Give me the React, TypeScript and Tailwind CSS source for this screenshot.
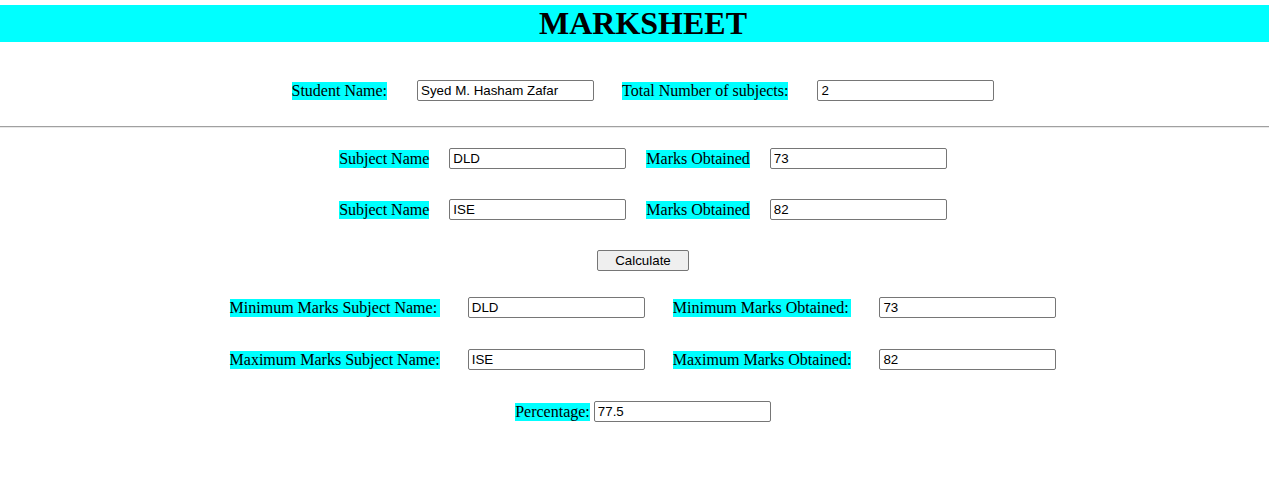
import React from "react";

const Label = ({ children }: { children: React.ReactNode }) => (
  <span className="bg-[#00ffff] text-[16px] leading-[18px] text-black whitespace-nowrap">{children}</span>
);

const Input = ({ value }: { value: string }) => (
  <input
    readOnly
    value={value}
    className="w-[177px] h-[21px] border border-[#767676] rounded-[2px] px-[3px] bg-white text-black text-[13.33px] font-['Liberation_Sans',Arial,sans-serif] outline-none"
  />
);

export default function App() {
  return (
    <div className="font-['Liberation_Serif','Times_New_Roman',serif] text-black bg-white w-[1269px] h-[500px]">
      <div className="mt-[5px] h-[37px] bg-[#00ffff] flex items-center justify-center pl-[17px]">
        <h1 className="text-[32px] font-bold leading-[37px]">MARKSHEET</h1>
      </div>

      <div className="mt-[38px] h-[21px] flex items-center justify-center pl-[17px]">
        <Label>Student Name:</Label>
        <span className="w-[30px]" />
        <Input value="Syed M. Hasham Zafar" />
        <span className="w-[28px]" />
        <Label>Total Number of subjects:</Label>
        <span className="w-[29px]" />
        <Input value="2" />
      </div>

      <div className="mt-[25px] h-[2px] border-t border-t-[#a0a0a0] border-b border-b-[#e8e8e8]" />

      <div className="mt-[20px] h-[21px] flex items-center justify-center pl-[17px]">
        <Label>Subject Name</Label>
        <span className="w-[20px]" />
        <Input value="DLD" />
        <span className="w-[20px]" />
        <Label>Marks Obtained</Label>
        <span className="w-[20px]" />
        <Input value="73" />
      </div>

      <div className="mt-[30px] h-[21px] flex items-center justify-center pl-[17px]">
        <Label>Subject Name</Label>
        <span className="w-[20px]" />
        <Input value="ISE" />
        <span className="w-[20px]" />
        <Label>Marks Obtained</Label>
        <span className="w-[20px]" />
        <Input value="82" />
      </div>

      <div className="mt-[30px] h-[21px] flex items-center justify-center pl-[17px]">
        <button className="w-[92px] h-[21px] bg-[#efefef] border border-[#767676] rounded-[2px] text-[13.33px] font-['Liberation_Sans',Arial,sans-serif] text-black leading-none">
          Calculate
        </button>
      </div>

      <div className="mt-[26px] flex justify-center pl-[17px]">
        <div className="grid grid-cols-[auto_auto_auto_auto] gap-x-[28px] gap-y-[31px] items-center">
          <Label>Minimum Marks Subject Name:</Label>
          <Input value="DLD" />
          <Label>Minimum Marks Obtained:</Label>
          <Input value="73" />
          <Label>Maximum Marks Subject Name:</Label>
          <Input value="ISE" />
          <Label>Maximum Marks Obtained:</Label>
          <Input value="82" />
        </div>
      </div>

      <div className="mt-[31px] h-[21px] flex items-center justify-center pl-[17px] gap-[4px]">
        <Label>Percentage:</Label>
        <Input value="77.5" />
      </div>
    </div>
  );
}
